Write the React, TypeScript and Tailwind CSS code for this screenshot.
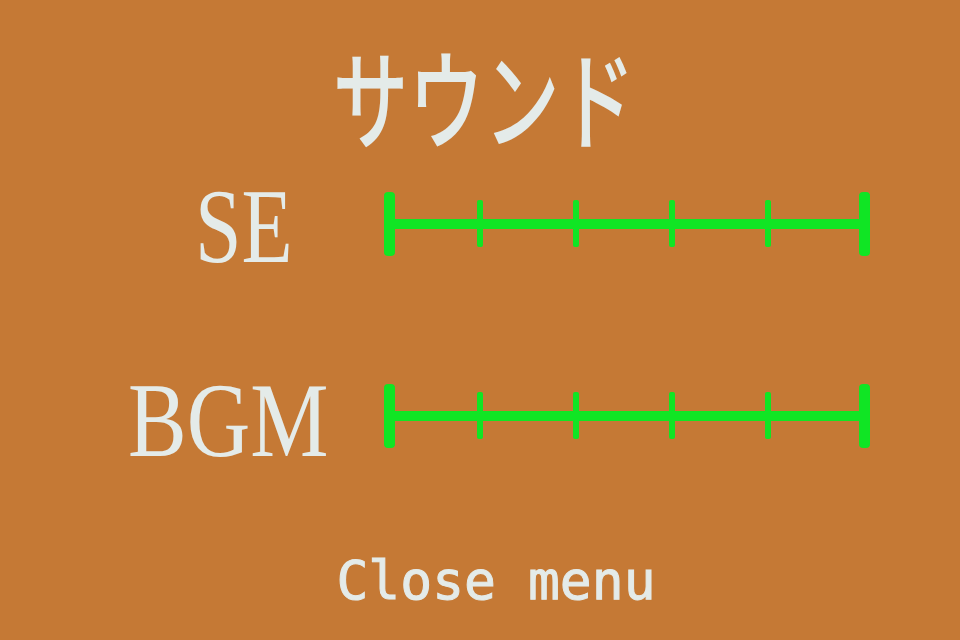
import React from "react";

function Slider() {
  const ticks = [93, 189, 285, 381];
  return (
    <svg width="486" height="64" viewBox="0 0 486 64" className="block">
      <rect x="5" y="27" width="475" height="10" fill="#10e524" />
      <rect x="0" y="0" width="11" height="64" rx="4" fill="#10e524" />
      <rect x="475" y="0" width="11" height="64" rx="4" fill="#10e524" />
      {ticks.map((t) => (
        <rect key={t} x={t} y="8" width="6" height="47" rx="2" fill="#10e524" />
      ))}
    </svg>
  );
}

export default function App() {
  return (
    <div className="w-[960px] h-[640px] bg-[#c57935] text-[#e4ebe9] flex flex-col overflow-hidden">
      <div className="h-[170px] flex justify-center pt-[40px] pl-[8px]">
        <div
          className="text-[108px] font-medium leading-none scale-x-[0.7] origin-center whitespace-nowrap"
          style={{ fontFamily: '"Noto Sans CJK JP", sans-serif' }}
        >
          サウンド
        </div>
      </div>
      <div className="flex flex-row items-start mt-[22px] h-[192px]">
        <div className="w-[384px] pl-[195px]">
          <div
            className="text-[106px] leading-none scale-x-[0.79] origin-left whitespace-nowrap -mt-[18px]"
            style={{ fontFamily: '"Liberation Serif", serif' }}
          >
            SE
          </div>
        </div>
        <Slider />
      </div>
      <div className="flex flex-row items-start h-[150px]">
        <div className="w-[384px] pl-[128px]">
          <div
            className="text-[106px] leading-none scale-x-[0.83] origin-left whitespace-nowrap -mt-[16px]"
            style={{ fontFamily: '"Liberation Serif", serif' }}
          >
            BGM
          </div>
        </div>
        <Slider />
      </div>
      <div className="flex justify-center pl-[32px] pt-[20px]">
        <div
          className="text-[53px] leading-none whitespace-nowrap [-webkit-text-stroke:1px_#e4ebe9]"
          style={{ fontFamily: '"DejaVu Sans Mono", monospace' }}
        >
          Close menu
        </div>
      </div>
    </div>
  );
}
